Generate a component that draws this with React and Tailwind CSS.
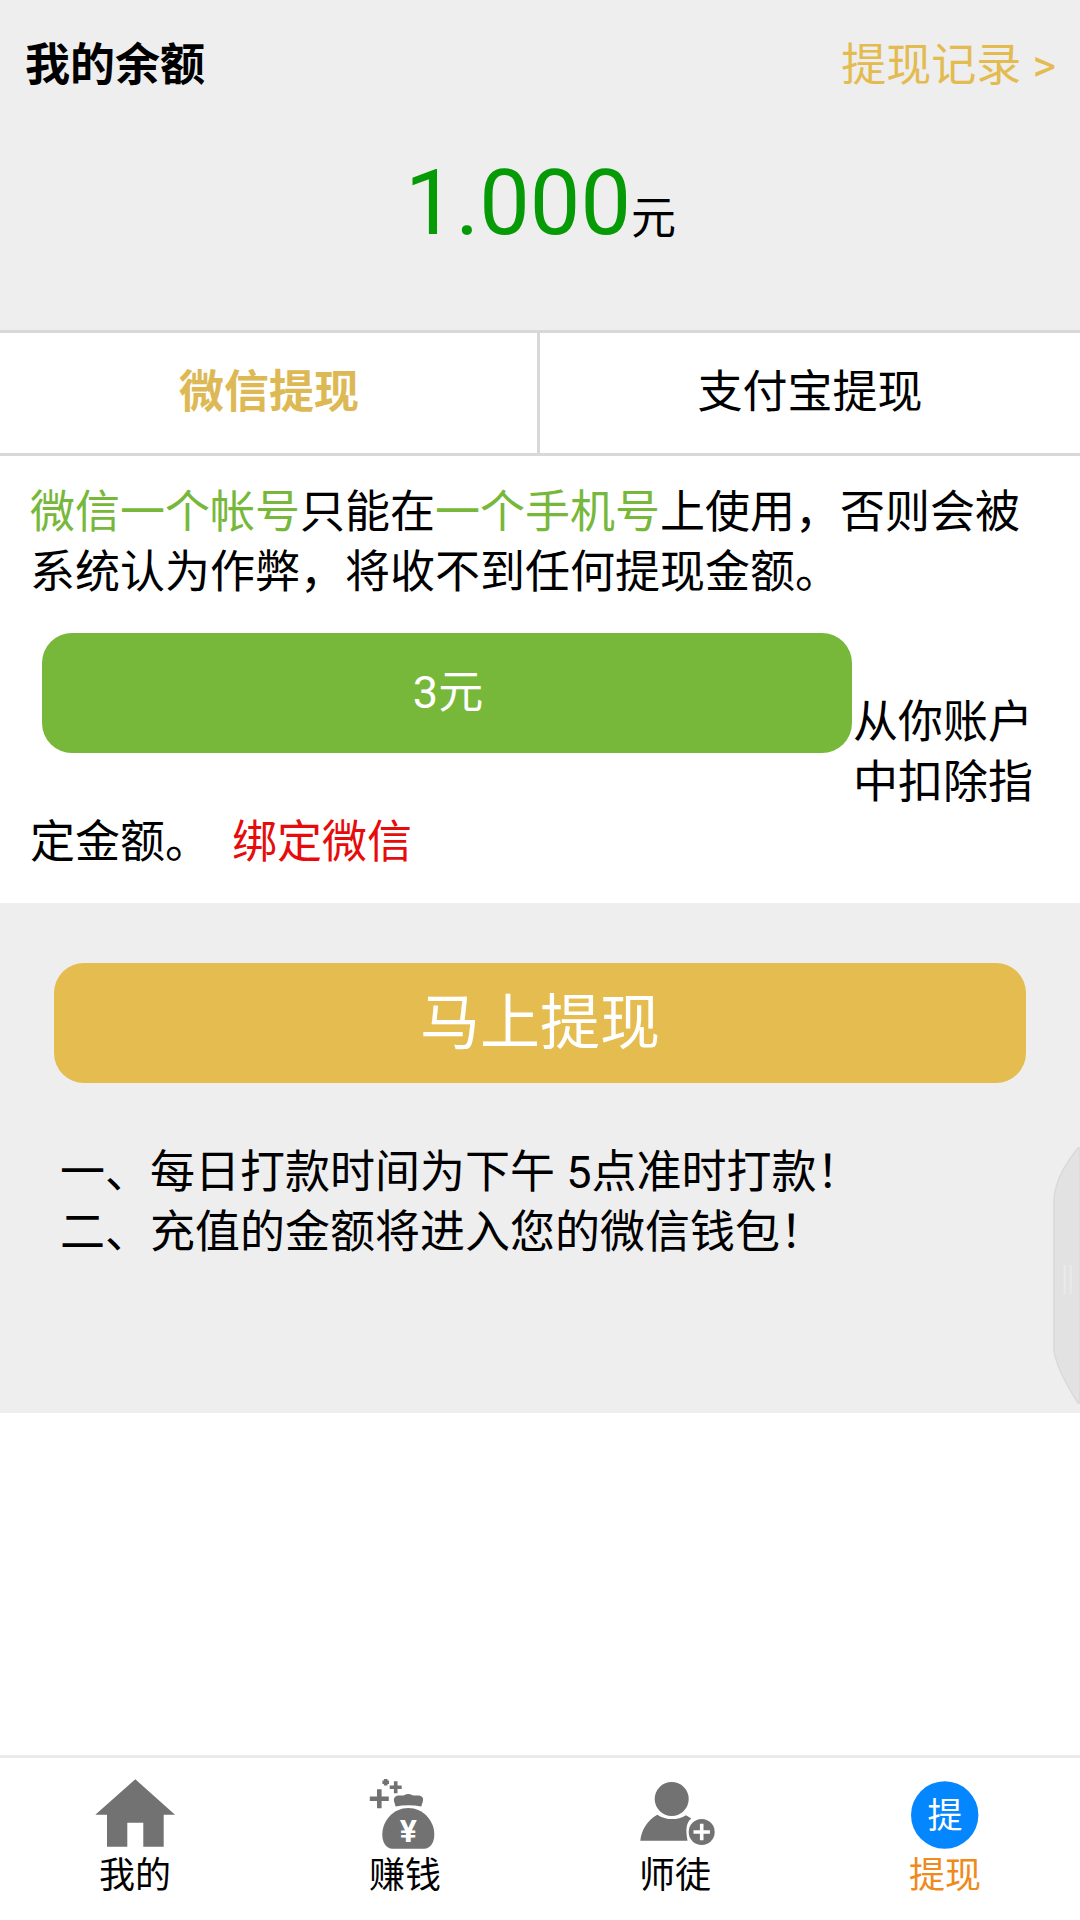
import { useState } from "react";

// ─────────────────────────────────────────────────────────────────────────────
// Withdraw page: balance header, channel tabs, amount picker, submit button,
// rules and the bottom navigation.
// ─────────────────────────────────────────────────────────────────────────────

function HomeIcon() {
    return (
        <svg className="w-[90px] h-[85px]" viewBox="0 0 90 85" fill="#727272">
            <path d="M45.3 9.3L85 44.7H73.7V76.7H53.3V52.7H37.3V76.7H17V44.7H5.3Z" />
        </svg>
    );
}

function MoneyBagIcon() {
    return (
        <svg className="w-[90px] h-[85px]" viewBox="0 0 90 85" fill="#727272">
            <path d="M19.3 19.2V38.2M9.8 28.7H28.8" stroke="#727272" strokeWidth="4.6" />
            <path d="M35.7 11.3V23.3M29.7 17.3H41.7" stroke="#727272" strokeWidth="3.6" />
            <path d="M25.7 9V15.6M22.4 12.3H29" stroke="#727272" strokeWidth="3.6" />
            <path d="M38 25.6C41 25 43 26 44.5 25C46.5 23.6 50 23.6 52 25C54 26 56 25.3 59 25.6C62.3 26 63.8 28.5 62.8 31.5L61.3 36.6C53 34.8 44 34.8 35.6 36.6L34.1 31.5C33.3 28.5 35 26 38 25.6Z" />
            <path d="M48.3 38C63 38 74.3 50.5 74.3 64.5C74.3 72.5 70.5 78.7 64 78.7H32.5C26 78.7 22.3 72.5 22.3 64.5C22.3 50.5 33.6 38 48.3 38Z" />
            <text x="48.3" y="71.5" textAnchor="middle" fill="#fff" className="font-[Roboto] font-bold text-[32px]">¥</text>
        </svg>
    );
}

function UserAddIcon() {
    return (
        <svg className="w-[90px] h-[85px]" viewBox="0 0 90 85" fill="#727272">
            <circle cx="41.7" cy="29" r="17" />
            <path d="M27.3 44.7C36 50.5 47.5 50.5 56 45.2L61.3 48.5C56.6 52.5 55.2 58 57.5 70.7H10.3C11.5 60 17 50.5 27.3 44.7Z" />
            <circle cx="71.7" cy="62" r="13" />
            <path d="M71.7 53.8V70.2M63.5 62H79.9" stroke="#fff" strokeWidth="3.6" />
        </svg>
    );
}

function WithdrawIcon() {
    return (
        <svg className="w-[90px] h-[85px]" viewBox="0 0 90 85">
            <circle cx="44.7" cy="45" r="33.7" fill="#0486fe" />
            <text x="45" y="57.5" textAnchor="middle" fill="#fff" className="text-[35px]">提</text>
        </svg>
    );
}

const NAV_ITEMS = [
    { label: "我的", Icon: HomeIcon },
    { label: "赚钱", Icon: MoneyBagIcon },
    { label: "师徒", Icon: UserAddIcon },
    { label: "提现", Icon: WithdrawIcon, active: true },
];

const TABS = ["微信提现", "支付宝提现"];

function Tabs({ current, onChange }) {
    return (
        <div className="flex h-[126px] border-y-3 border-[#d8d8d8] bg-white">
            {TABS.map((tab, i) => (
                <button
                    key={tab}
                    onClick={() => onChange(i)}
                    className={`w-1/2 pb-px ${i === 0 ? "border-r-3 border-[#d8d8d8] pl-px" : ""} ${current === i ? "font-bold text-[#ddb955]" : ""}`}
                >
                    {tab}
                </button>
            ))}
        </div>
    );
}

// Half-hidden drawer handle on the right screen edge
function EdgeHandle() {
    return (
        <svg className="absolute right-0 top-[1145px] w-[28px] h-[262px]" viewBox="0 0 28 262">
            <path d="M28 3H26C15 17 2.5 35 2 56V206C5 224 17 244 26 258H28Z" fill="#e2e2e2" stroke="#d9d9d9" strokeWidth="1.5" />
            <path d="M12.7 120V149M18.7 120V149" stroke="#eaeaea" strokeWidth="2" />
        </svg>
    );
}

export default function App() {
    const [tab, setTab] = useState(0);

    return (
        <div
            lang="zh-CN"
            className="relative flex flex-col w-[1080px] h-[1920px] overflow-hidden bg-white text-black text-[45px] leading-[60px] font-[Roboto,'Noto_Sans_CJK_SC',sans-serif]"
        >
            {/* Balance */}
            <header className="h-[330px] bg-[#eeeeee] pl-[25px] pr-6 pt-9">
                <div className="flex justify-between">
                    <h1 className="font-bold">我的余额</h1>
                    <a className="text-[#e3bb50]">提现记录 &gt;</a>
                </div>
                <p className="mt-[48px] text-center leading-[120px]">
                    <span className="text-[90px] text-[#069a06]">1.000</span>元
                </p>
            </header>

            <Tabs current={tab} onChange={setTab} />

            {/* Account notice and amount */}
            <section className="h-[447px] px-[30px] pt-[27px]">
                <p>
                    <span className="text-[#77b83b]">微信一个帐号</span>只能在
                    <span className="text-[#77b83b]">一个手机号</span>上使用，否则会被系统认为作弊，将收不到任何提现金额。
                </p>
                <div className="mt-[30px]">
                    <button className="float-left ml-3 mr-px mb-[30px] w-[810px] h-[120px] rounded-[30px] bg-[#77b83b] pl-0.5 text-white">
                        3元
                    </button>
                    <p className="pt-[60px]">
                        从你账户中扣除指定金额。
                        <a className="ml-[22px] text-[#e60c0c]">绑定微信</a>
                    </p>
                </div>
            </section>

            {/* Submit and rules */}
            <section className="h-[510px] bg-[#eeeeee] px-[54px] pt-[60px]">
                <button className="block w-full h-[120px] rounded-[30px] bg-[#e4bc50] pt-0.5 text-white text-[60px]">
                    马上提现
                </button>
                <div className="mt-[60px] px-[6px]">
                    <p>一、每日打款时间为下午 5点准时打款！</p>
                    <p>二、充值的金额将进入您的微信钱包！</p>
                </div>
            </section>

            <nav className="mt-auto flex h-[165px] border-t-3 border-[#ebebeb] bg-white pt-3 text-[36px] leading-[42px]">
                {NAV_ITEMS.map(({ label, Icon, active }) => (
                    <a key={label} className={`flex w-1/4 flex-col items-center ${active ? "text-[#ef8a1d]" : ""}`}>
                        <Icon />
                        {label}
                    </a>
                ))}
            </nav>

            <EdgeHandle />
        </div>
    );
}
